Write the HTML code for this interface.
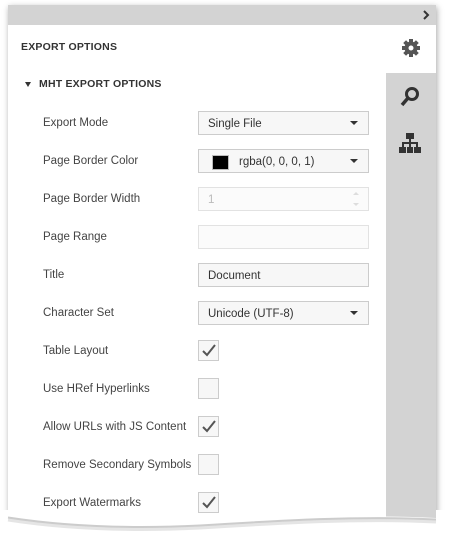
<!DOCTYPE html>
<html><head><style>
body{margin:0;width:449px;height:545px;background:#fff;position:relative;overflow:hidden;font-family:"Segoe UI","Liberation Sans",sans-serif;}
.panel{position:absolute;left:8px;top:5px;width:428px;height:530px;background:#fff;box-shadow:1px 2px 6px rgba(0,0,0,.35);}
.hdr{position:absolute;left:0;top:0;width:428px;height:20px;background:#d3d3d3;}
.side{position:absolute;left:378px;top:68px;width:50px;height:470px;background:#d3d3d3;}
.t1{position:absolute;left:13px;top:36px;font-size:10.5px;font-weight:bold;color:#333;letter-spacing:.2px;}
.t2{position:absolute;left:31px;top:73px;font-size:10.5px;font-weight:bold;color:#333;letter-spacing:.2px;}
.lbl{position:absolute;left:35px;font-size:11.5px;color:#444;}
.inp{position:absolute;left:190px;width:171px;height:24px;border:1px solid #ccc;background:#f7f7f7;box-sizing:border-box;font-size:11.5px;color:#333;line-height:24px;padding-left:9px;}
.dis{background:#fbfbfb;border-color:#e2e2e2;color:#bbb;}
.arr{position:absolute;right:10px;top:9px;width:0;height:0;border-left:4px solid transparent;border-right:4px solid transparent;border-top:4px solid #333;}
.cb{position:absolute;left:190px;width:21px;height:21px;border:1px solid #ccc;background:#f7f7f7;box-sizing:border-box;}
.cb svg{position:absolute;left:2px;top:2px;}
.wave{position:absolute;left:0;top:510px;}
</style></head><body>
<div class="panel">
<div class="hdr"><svg style="position:absolute;left:414px;top:5px" width="8" height="10"><path d="M2 1L6 5L2 9" stroke="#333" stroke-width="2" fill="none"/></svg></div>
<div class="side"></div>
<div class="t1">EXPORT OPTIONS</div>
<svg style="position:absolute;left:393px;top:33px" width="20" height="20" viewBox="0 0 20 20"><g fill="#555"><circle cx="10" cy="10" r="6.5"/><rect x="8" y="1" width="4" height="18"/><rect x="1" y="8" width="18" height="4"/><rect x="8" y="1" width="4" height="18" transform="rotate(45 10 10)"/><rect x="8" y="1" width="4" height="18" transform="rotate(-45 10 10)"/></g><circle cx="10" cy="10" r="2.5" fill="#fff"/></svg>
<svg style="position:absolute;left:392px;top:81px" width="20" height="22" viewBox="0 0 20 22"><circle cx="12" cy="8" r="5.5" stroke="#333" stroke-width="3" fill="none"/><path d="M8 12L2 19" stroke="#333" stroke-width="3.5"/></svg>
<svg style="position:absolute;left:391px;top:128px" width="22" height="22" viewBox="0 0 22 22"><g fill="#333"><rect x="7" y="0" width="8" height="6"/><rect x="10" y="6" width="2" height="4"/><rect x="3" y="9" width="16" height="2"/><rect x="3" y="9" width="2" height="5"/><rect x="17" y="9" width="2" height="5"/><rect x="10" y="9" width="2" height="5"/><rect x="0" y="14" width="7" height="6"/><rect x="8" y="14" width="6" height="6"/><rect x="15" y="14" width="7" height="6"/></g></svg>
<div style="position:absolute;left:17px;top:77px;width:0;height:0;border-left:3px solid transparent;border-right:3px solid transparent;border-top:5px solid #333"></div>
<div class="t2">MHT EXPORT OPTIONS</div>

<div class="lbl" style="top:112px">Export Mode</div>
<div class="inp" style="top:106px">Single File<div class="arr"></div></div>
<div class="lbl" style="top:150px">Page Border Color</div>
<div class="inp" style="top:144px;padding-left:40px">rgba(0, 0, 0, 1)<div style="position:absolute;left:13px;top:5px;width:15px;height:13px;background:#000;border:1px solid #bbb"></div><div class="arr"></div></div>
<div class="lbl" style="top:188px">Page Border Width</div>
<div class="inp dis" style="top:182px">1<div style="position:absolute;right:9px;top:4px;border-left:3px solid transparent;border-right:3px solid transparent;border-bottom:3px solid #ddd"></div><div style="position:absolute;right:9px;top:15px;border-left:3px solid transparent;border-right:3px solid transparent;border-top:3px solid #ddd"></div></div>
<div class="lbl" style="top:226px">Page Range</div>
<div class="inp dis" style="top:220px"></div>
<div class="lbl" style="top:264px">Title</div>
<div class="inp" style="top:258px">Document</div>
<div class="lbl" style="top:302px">Character Set</div>
<div class="inp" style="top:296px">Unicode (UTF-8)<div class="arr"></div></div>
<div class="lbl" style="top:340px">Table Layout</div>
<div class="cb" style="top:335px"><svg width="16" height="16"><path d="M2 8L6 12L14 2" stroke="#555" stroke-width="2" fill="none"/></svg></div>
<div class="lbl" style="top:378px">Use HRef Hyperlinks</div>
<div class="cb" style="top:373px"></div>
<div class="lbl" style="top:416px">Allow URLs with JS Content</div>
<div class="cb" style="top:411px"><svg width="16" height="16"><path d="M2 8L6 12L14 2" stroke="#555" stroke-width="2" fill="none"/></svg></div>
<div class="lbl" style="top:454px">Remove Secondary Symbols</div>
<div class="cb" style="top:449px"></div>
<div class="lbl" style="top:492px">Export Watermarks</div>
<div class="cb" style="top:487px"><svg width="16" height="16"><path d="M2 8L6 12L14 2" stroke="#555" stroke-width="2" fill="none"/></svg></div>
</div>
<svg class="wave" width="449" height="35"><path d="M0 0H449V35H0Z M8 0V6C60 14 120 18 200 14C280 9 360 4 436 8V0Z" fill="#fff" fill-rule="evenodd"/></svg>
<svg style="position:absolute;left:0;top:510px" width="449" height="35"><path d="M8 6C60 14 120 18 200 14C280 9 360 4 436 8" stroke="rgba(0,0,0,.2)" stroke-width="2" fill="none" transform="translate(0,1.5)"/><path d="M8 6C60 14 120 18 200 14C280 9 360 4 436 8" stroke="rgba(0,0,0,.1)" stroke-width="3" fill="none" transform="translate(0,4)"/></svg>
</body></html>
